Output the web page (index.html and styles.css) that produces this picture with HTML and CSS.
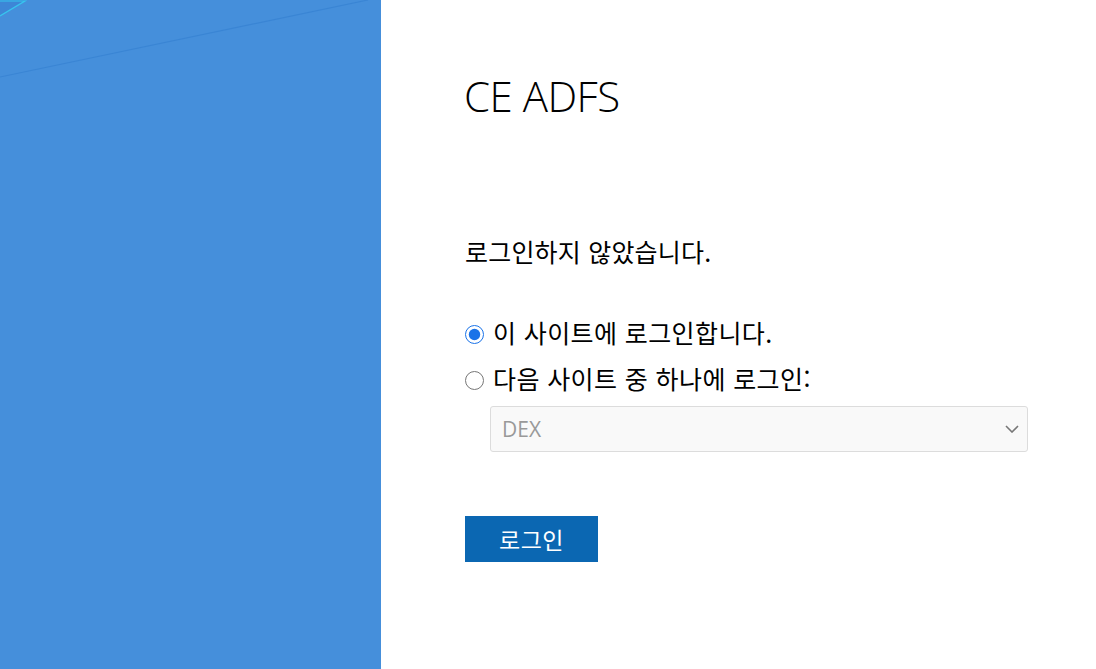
FILE: index.html
```html
<!DOCTYPE html>
<html lang="ko">
<head>
<meta charset="utf-8">
<title>CE ADFS</title>
<link rel="stylesheet" href="styles.css">
</head>
<body>
<div class="page">
  <div class="illustration">
    <svg class="art" width="381" height="669" viewBox="0 0 381 669" xmlns="http://www.w3.org/2000/svg">
      <polygon points="0,0 25,0 0,15" fill="#3d86d6"/>
      <polyline points="0,1 25,1 0,16" fill="none" stroke="#36c6ee" stroke-width="1.2"/>
      <line x1="0" y1="77" x2="368" y2="0" stroke="#3a85d4" stroke-width="1.2"/>
    </svg>
  </div>
  <div class="content">
    <h1 class="title">CE ADFS</h1>
    <p class="status">로그인하지 않았습니다.</p>
    <div class="options">
      <label class="option"><input type="radio" name="site" checked><span>이 사이트에 로그인합니다.</span></label>
      <label class="option"><input type="radio" name="site"><span>다음 사이트 중 하나에 로그인:</span></label>
      <div class="select">
        <span class="select-value">DEX</span>
        <svg class="chevron" width="14" height="8" viewBox="0 0 14 8"><polyline points="1,1 7,7 13,1" fill="none" stroke="#777" stroke-width="1.6"/></svg>
      </div>
    </div>
    <button class="submit">로그인</button>
  </div>
</div>
</body>
</html>
```
FILE: styles.css
```css
html, body {
  margin: 0;
  padding: 0;
  height: 100%;
  background: #fff;
}
body {
  font-family: "Noto Sans", "Noto Sans CJK KR", sans-serif;
  color: #000;
}
.page {
  display: flex;
  height: 669px;
}
.illustration {
  width: 381px;
  flex: none;
  background: #458fdb;
  overflow: hidden;
}
.art {
  display: block;
}
.content {
  padding: 68px 0 0 84px;
  display: flex;
  flex-direction: column;
  align-items: flex-start;
}
.title {
  margin: 0;
  font-family: "Open Sans", sans-serif;
  font-weight: 300;
  font-size: 42px;
  line-height: 56px;
  letter-spacing: -0.5px;
  margin-left: -1px;
}
.status {
  margin: 112px 0 0 0;
  font-family: "Noto Sans CJK KR", sans-serif;
  font-size: 25px;
  line-height: 30px;
  letter-spacing: 0.2px;
}
.options {
  margin-top: 44px;
  display: flex;
  flex-direction: column;
}
.option {
  display: flex;
  align-items: center;
  height: 46px;
  font-family: "Noto Sans CJK KR", sans-serif;
  font-size: 25px;
  letter-spacing: 0.4px;
}
.option span {
  margin-top: -2px;
}
.option input {
  width: 19px;
  height: 19px;
  margin: 2px 9px 0 0;
  accent-color: #1a73e8;
}
.select {
  margin: 4px 0 0 25px;
  border: 1px solid #dcdcdc;
  border-radius: 3px;
  background: #f9f9f9;
  display: flex;
  align-items: center;
  justify-content: space-between;
  padding: 0 8px 0 11px;
  box-sizing: border-box;
  height: 46px;
  width: 538px;
}
.select-value {
  font-family: "Open Sans", sans-serif;
  font-size: 21px;
  color: #999;
}
.submit {
  margin-top: 64px;
  width: 133px;
  height: 46px;
  border: none;
  background: #0b67b2;
  color: #fff;
  font-family: "Noto Sans CJK KR", sans-serif;
  font-size: 23px;
  letter-spacing: 0.5px;
  padding: 0;
}
```
